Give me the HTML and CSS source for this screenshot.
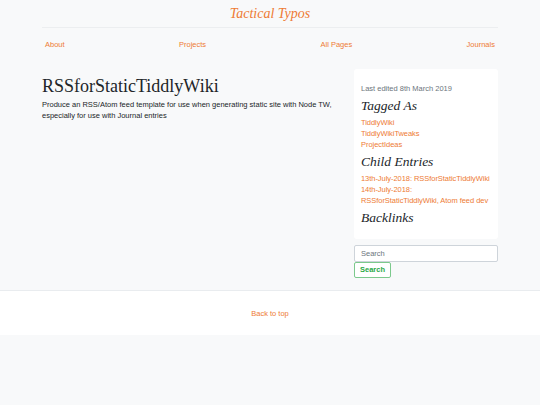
FILE: index.html
```html
<!DOCTYPE html>
<html>
<head>
<meta charset="utf-8">
<link rel="stylesheet" href="styles.css">
</head>
<body>
<div class="page">
  <header class="container">
    <div class="brand">Tactical Typos</div>
    <nav class="nav">
      <a href="#">About</a>
      <a href="#">Projects</a>
      <a href="#">All Pages</a>
      <a href="#">Journals</a>
    </nav>
  </header>
  <main class="container main">
    <article class="post">
      <h1 class="post-title">RSSforStaticTiddlyWiki</h1>
      <p class="post-text">Produce an RSS/Atom feed template for use when generating static site with Node TW, especially for use with Journal entries</p>
    </article>
    <aside class="sidebar">
      <div class="box">
        <p class="muted">Last edited 8th March 2019</p>
        <h4 class="side-title">Tagged As</h4>
        <ul class="links">
          <li><a href="#">TiddlyWiki</a></li>
          <li><a href="#">TiddlyWikiTweaks</a></li>
          <li><a href="#">ProjectIdeas</a></li>
        </ul>
        <h4 class="side-title">Child Entries</h4>
        <ul class="links">
          <li><a href="#">13th-July-2018: RSSforStaticTiddlyWiki</a></li>
          <li><a href="#">14th-July-2018: RSSforStaticTiddlyWiki, Atom feed dev</a></li>
        </ul>
        <h4 class="side-title">Backlinks</h4>
      </div>
      <form class="search">
        <input class="search-input" type="text" placeholder="Search">
        <button class="search-btn" type="button">Search</button>
      </form>
    </aside>
  </main>
  <footer class="footer">
    <a href="#">Back to top</a>
  </footer>
</div>
</body>
</html>
```
FILE: styles.css
```css
* { box-sizing: border-box; }
html, body {
  margin: 0;
  padding: 0;
  background: #f8f9fa;
  font-family: "Liberation Sans", Arial, sans-serif;
  font-size: 7.5px;
  color: #212529;
}
a { color: #ee7b35; text-decoration: none; }
.container {
  width: 456px;
  margin: 0 auto;
}
.brand {
  text-align: center;
  font-family: "Liberation Serif", "DejaVu Serif", serif;
  font-style: italic;
  font-size: 14px;
  color: #ee7b35;
  padding-top: 6px;
  height: 28px;
  border-bottom: 1px solid #eceef0;
}
.nav {
  display: flex;
  justify-content: space-between;
  padding: 11.5px 3px 0 3px;
  height: 41px;
}
.main {
  display: flex;
  justify-content: space-between;
  align-items: flex-start;
  padding-bottom: 12px;
}
.post { width: 300px; }
.post-title {
  margin: 6px 0 1.5px;
  font-family: "Liberation Serif", "DejaVu Serif", serif;
  font-weight: normal;
  font-size: 18px;
  line-height: 22px;
  color: #212529;
}
.post-text {
  margin: 0;
  line-height: 11px;
}
.sidebar { width: 144px; }
.box {
  background: #fff;
  border-radius: 3px;
  padding: 13.5px 7px 10px 7px;
}
.muted {
  margin: 0 0 4.5px;
  color: #6c757d;
  line-height: 11px;
}
.side-title {
  margin: 0 0 3px;
  font-family: "Liberation Serif", "DejaVu Serif", serif;
  font-style: italic;
  font-weight: normal;
  font-size: 13.5px;
  line-height: 16px;
  color: #212529;
}
.links {
  list-style: none;
  margin: 0 0 4px;
  padding: 0;
  line-height: 11px;
  letter-spacing: -0.05px;
}
.search {
  margin-top: 6px;
}
.search-input {
  display: block;
  width: 144px;
  height: 16.5px;
  border: 1px solid #ced4da;
  border-radius: 2px;
  padding: 0 6px;
  font-family: "Liberation Sans", Arial, sans-serif;
  font-size: 7.5px;
  background: #fff;
}
.search-input::placeholder { color: #6c757d; }
.search-btn {
  display: block;
  height: 16px;
  padding: 0 5px;
  border: 1px solid #7cc98c;
  border-radius: 2px;
  background: #fff;
  color: #28a745;
  font-family: "Liberation Sans", Arial, sans-serif;
  font-weight: bold;
  font-size: 7.5px;
}
.footer {
  background: #fff;
  border-top: 1px solid #e9ecef;
  height: 45px;
  padding-top: 18px;
  text-align: center;
}
```
